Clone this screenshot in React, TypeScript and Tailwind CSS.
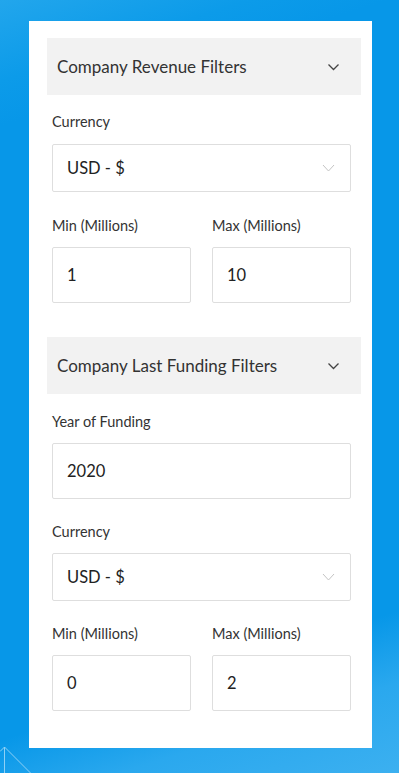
import { ReactNode } from 'react';

const font = { fontFamily: '"Source Sans Pro", Lato, "Noto Sans", sans-serif' };

function Chevron({ light }: { light?: boolean }) {
  return (
    <svg
      width="13"
      height="8"
      viewBox="0 0 13 8"
      fill="none"
      stroke={light ? '#c4c4c4' : '#444'}
      strokeWidth={light ? 1 : 1.3}
    >
      <path d={light ? 'M1 1l5.5 6L12 1' : 'M1.5 1.5l5 5 5-5'} />
    </svg>
  );
}

function SectionHeader({ title }: { title: string }) {
  return (
    <div className="h-[57px] bg-[#f2f2f2] flex items-center justify-between pl-[10px] pr-[21px]">
      <span className="text-[17px] text-[#333]">{title}</span>
      <Chevron />
    </div>
  );
}

function Label({ children, className = '' }: { children: ReactNode; className?: string }) {
  return <div className={`h-5 leading-5 text-[14.5px] text-[#333] ${className}`}>{children}</div>;
}

function Field({ value, className = '' }: { value: string; className?: string }) {
  return (
    <div
      className={`h-[56px] border border-[#dedede] rounded-[2px] flex items-center pl-[14px] text-[16.5px] text-[#222] ${className}`}
    >
      {value}
    </div>
  );
}

function CurrencySelect() {
  return (
    <div className="h-[48px] border border-[#dedede] rounded-[2px] flex items-center justify-between pl-[14px] pr-[15px] text-[16.5px] text-[#222]">
      <span>USD - $</span>
      <Chevron light />
    </div>
  );
}

function MinMax({ min, max }: { min: string; max: string }) {
  return (
    <div className="grid grid-cols-2 gap-x-[21px]">
      <div>
        <Label>Min (Millions)</Label>
        <Field value={min} className="mt-[11px]" />
      </div>
      <div>
        <Label>Max (Millions)</Label>
        <Field value={max} className="mt-[11px]" />
      </div>
    </div>
  );
}

export default function App() {
  return (
    <div
      className="relative w-[399px] h-[773px] overflow-hidden bg-[#0797e8] bg-[linear-gradient(162deg,#22a6ec_0%,#0c9be9_9%,#0797e8_14%,#0797e8_82%,#2aa8ee_90%,#3cb0f0_100%)] pt-[21px]"
      style={font}
    >
      {/* Corner decoration */}
      <svg className="absolute left-0 bottom-0" width="40" height="27" viewBox="0 0 40 27" fill="none">
        <path d="M0 5.5L4.5 1L30.5 27M4.5 1V27" stroke="#8fd0f5" strokeWidth="1" />
      </svg>

      <div className="relative ml-[29px] w-[343px] bg-white pt-[17px] pl-[18px] pr-[11px] pb-[37px]">
        <SectionHeader title="Company Revenue Filters" />
        <div className="pl-[5px] pr-[10px]">
          <Label className="mt-[17px]">Currency</Label>
          <div className="mt-[12px]">
            <CurrencySelect />
          </div>
          <div className="mt-[24px]">
            <MinMax min="1" max="10" />
          </div>
        </div>

        <div className="mt-[34px]">
          <SectionHeader title="Company Last Funding Filters" />
        </div>
        <div className="pl-[5px] pr-[10px]">
          <Label className="mt-[18px]">Year of Funding</Label>
          <Field value="2020" className="mt-[11px] h-[55px]" />
          <Label className="mt-[23px]">Currency</Label>
          <div className="mt-[11px]">
            <CurrencySelect />
          </div>
          <div className="mt-[23px]">
            <MinMax min="0" max="2" />
          </div>
        </div>
      </div>
    </div>
  );
}
